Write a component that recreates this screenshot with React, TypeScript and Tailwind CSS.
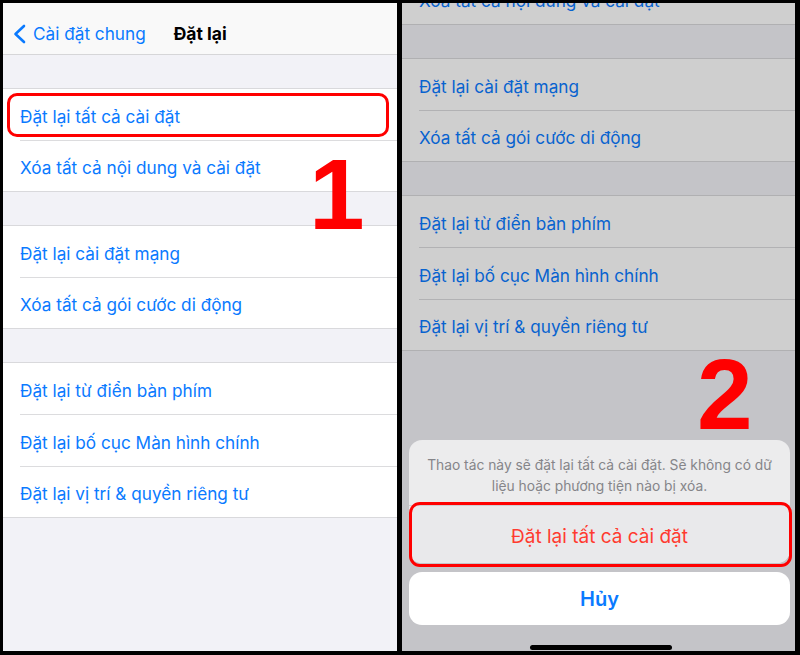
const groups: string[][] = [
  ['Đặt lại tất cả cài đặt', 'Xóa tất cả nội dung và cài đặt'],
  ['Đặt lại cài đặt mạng', 'Xóa tất cả gói cước di động'],
  ['Đặt lại từ điển bàn phím', 'Đặt lại bố cục Màn hình chính', 'Đặt lại vị trí & quyền riêng tư'],
];

function SettingsList({ highlightFirst }: { highlightFirst?: boolean }) {
  return (
    <div className="flex flex-col">
      {groups.map((rows, gi) => (
        <div key={gi} className="flex flex-col">
          {/* section gap */}
          <div className="h-[33px]" />
          <div className="bg-white border-y border-[#d9d9dc]">
            {rows.map((label, ri) => {
              const last = ri === rows.length - 1;
              return (
                <div key={label} className="relative pl-[17px]">
                  <div
                    className={`flex items-center pt-[4px] text-[17.2px] text-[#0a7aff] ${
                      last ? 'h-[50px]' : 'h-[52px] border-b border-[#dcdcde]'
                    }`}
                  >
                    {label}
                  </div>
                  {highlightFirst && gi === 0 && ri === 0 && (
                    <div className="absolute left-[4px] right-[8px] top-[4px] bottom-[4px] rounded-[10px] border-[3px] border-[#ff0000]" />
                  )}
                </div>
              );
            })}
          </div>
        </div>
      ))}
    </div>
  );
}

function BackChevron() {
  return (
    <svg width="13" height="20" viewBox="0 0 13 20" fill="none">
      <polyline
        points="11,2 2.5,10 11,18"
        stroke="#0a7aff"
        strokeWidth="2.6"
        strokeLinecap="round"
        strokeLinejoin="round"
      />
    </svg>
  );
}

export default function App() {
  return (
    <div className="w-[800px] h-[655px] bg-black flex gap-[5px] pt-[3px] pl-[3px] pr-[5px] pb-[4px] font-['Inter','Noto_Sans',sans-serif] overflow-hidden">
      {/* Step 1 */}
      <div className="relative w-[394px] bg-[#f2f2f7] flex flex-col overflow-hidden">
        <div className="h-[52px] bg-[#f9f9f9] border-b border-[#d6d6d8] flex items-center pl-[10px] pt-[11px]">
          <div className="flex items-center gap-[7px]">
            <BackChevron />
            <span className="text-[17.2px] text-[#0a7aff]">Cài đặt chung</span>
          </div>
          <span className="ml-[28px] text-[17.5px] font-bold text-black">Đặt lại</span>
        </div>
        <SettingsList highlightFirst />
        <div className="absolute left-[306px] top-[141px] text-[100px] leading-none font-bold text-[#ff0000] font-['Liberation_Sans',Arial,sans-serif]">
          1
        </div>
      </div>

      {/* Step 2 */}
      <div className="relative flex-1 bg-[#f2f2f7] overflow-hidden">
        <div className="-mt-[115px]">
          <SettingsList />
        </div>
        <div className="absolute inset-0 bg-black/[0.19]" />

        <div className="absolute left-[295px] top-[341px] text-[100px] leading-none font-bold text-[#ff0000] font-['Liberation_Sans',Arial,sans-serif]">
          2
        </div>

        {/* action sheet */}
        <div className="absolute left-[7px] right-[5px] top-[437px] flex flex-col gap-[9px]">
          <div className="rounded-[13px] bg-[#ececed] overflow-hidden">
            <div className="h-[65px] pt-[15px] px-[12px] text-center text-[13.8px] leading-[21px] text-[#858589] whitespace-nowrap">
              Thao tác này sẽ đặt lại tất cả cài đặt. Sẽ không có dữ
              <br />
              liệu hoặc phương tiện nào bị xóa.
            </div>
            <div className="h-[58px] border-t border-[#cfcfd2] bg-[#e9e9eb] flex items-center justify-center pt-[6px] text-[19px] text-[#ff3b30]">
              Đặt lại tất cả cài đặt
            </div>
          </div>
          <div className="h-[53px] rounded-[13px] bg-white flex items-center justify-center text-[20px] font-semibold text-[#0a7aff]">
            Hủy
          </div>
          <div className="absolute left-0 -right-[2px] top-[62px] h-[65px] rounded-[11px] border-[3px] border-[#ff0000]" />
        </div>

        <div className="absolute left-[128px] bottom-[1px] w-[142px] h-[5px] rounded-full bg-black" />
      </div>
    </div>
  );
}
